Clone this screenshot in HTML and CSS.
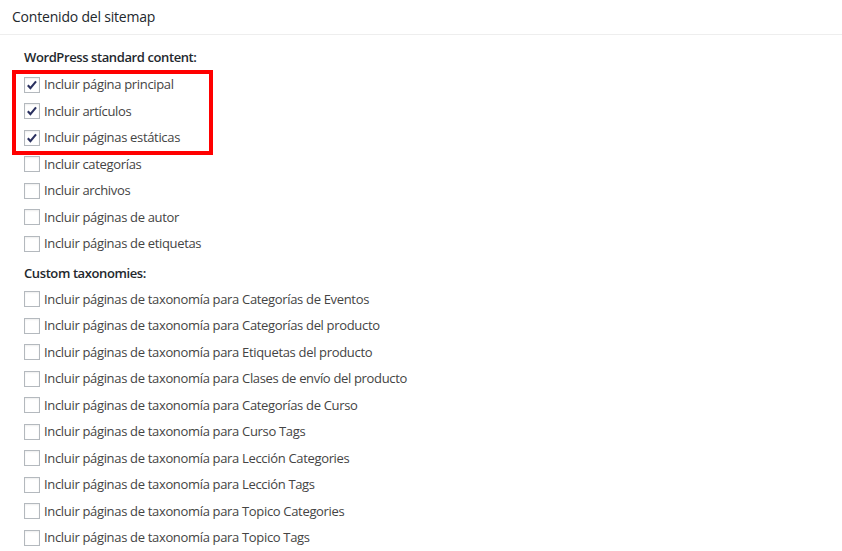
FILE: index.html
```html
<!DOCTYPE html>
<html lang="es">
  <head>
    <meta charset="utf-8">
    <title>Contenido del sitemap</title>
    <meta name="viewport" content="width=device-width">
    <link rel="stylesheet" href="styles.css">
  </head>
  <body>
    <div class="postbox">
      <h2 class="hndle">Contenido del sitemap</h2>
      <div class="inside">
        <h4 class="group-title first">WordPress standard content:</h4>
        <ul class="options">
          <li class="highlight">
            <ul class="options">
              <li><span class="cb checked"><svg viewBox="0 0 16 16"><path d="M3.2 8.3l3 3.2 6.4-7.6" /></svg></span><span class="lbl">Incluir página principal</span></li>
              <li><span class="cb checked"><svg viewBox="0 0 16 16"><path d="M3.2 8.3l3 3.2 6.4-7.6" /></svg></span><span class="lbl">Incluir artículos</span></li>
              <li><span class="cb checked"><svg viewBox="0 0 16 16"><path d="M3.2 8.3l3 3.2 6.4-7.6" /></svg></span><span class="lbl">Incluir páginas estáticas</span></li>
            </ul>
          </li>
          <li><span class="cb"></span><span class="lbl">Incluir categorías</span></li>
          <li><span class="cb"></span><span class="lbl">Incluir archivos</span></li>
          <li><span class="cb"></span><span class="lbl">Incluir páginas de autor</span></li>
          <li><span class="cb"></span><span class="lbl">Incluir páginas de etiquetas</span></li>
        </ul>

        <h4 class="group-title">Custom taxonomies:</h4>
        <ul class="options">
          <li><span class="cb"></span><span class="lbl">Incluir páginas de taxonomía para Categorías de Eventos</span></li>
          <li><span class="cb"></span><span class="lbl">Incluir páginas de taxonomía para Categorías del producto</span></li>
          <li><span class="cb"></span><span class="lbl">Incluir páginas de taxonomía para Etiquetas del producto</span></li>
          <li><span class="cb"></span><span class="lbl">Incluir páginas de taxonomía para Clases de envío del producto</span></li>
          <li><span class="cb"></span><span class="lbl">Incluir páginas de taxonomía para Categorías de Curso</span></li>
          <li><span class="cb"></span><span class="lbl">Incluir páginas de taxonomía para Curso Tags</span></li>
          <li><span class="cb"></span><span class="lbl">Incluir páginas de taxonomía para Lección Categories</span></li>
          <li><span class="cb"></span><span class="lbl">Incluir páginas de taxonomía para Lección Tags</span></li>
          <li><span class="cb"></span><span class="lbl">Incluir páginas de taxonomía para Topico Categories</span></li>
          <li><span class="cb"></span><span class="lbl">Incluir páginas de taxonomía para Topico Tags</span></li>
        </ul>
      </div>
    </div>
  </body>
</html>
```

FILE: styles.css
```css
body {
  margin: 0;
  background-color: #fff;
  font-family: "Open Sans", "Noto Sans", sans-serif;
  font-size: 13px;
  color: #444;
}

.postbox {
  background-color: #fff;
}

.hndle {
  margin: 0;
  padding: 9px 12px;
  font-size: 14px;
  font-weight: 400;
  line-height: 16px;
  letter-spacing: -0.2px;
  color: #23282d;
  border-bottom: 1px solid #eee;
}

.inside {
  padding: 0 24px;
}

.group-title {
  margin: 0;
  padding: 7px 0 4px;
  font-size: 13px;
  font-weight: 600;
  line-height: 18px;
  letter-spacing: -0.4px;
  color: #23282d;
}

.group-title.first {
  padding: 13px 0 5px;
}

.options {
  list-style: none;
  margin: 0;
  padding: 0;
}

.options li {
  display: flex;
  align-items: center;
  height: 26.5px;
}

.options li.highlight {
  display: block;
  height: auto;
  position: relative;
}

/* red annotation frame around the checked items */
.highlight::after {
  content: "";
  position: absolute;
  left: -12px;
  top: -1px;
  width: 201px;
  height: 85px;
  border: 4px solid #f00;
  box-sizing: border-box;
}

.cb {
  width: 16px;
  height: 16px;
  box-sizing: border-box;
  border: 1px solid #b4b9be;
  background-color: #fff;
  box-shadow: inset 0 1px 2px rgba(0, 0, 0, 0.07);
  flex-shrink: 0;
  margin-top: 1px;
}

.cb svg {
  display: block;
  width: 14px;
  height: 14px;
}

.cb svg path {
  fill: none;
  stroke: #2b3160;
  stroke-width: 2.4;
}

.lbl {
  margin-left: 4px;
  line-height: 18px;
  letter-spacing: -0.33px;
}
```
